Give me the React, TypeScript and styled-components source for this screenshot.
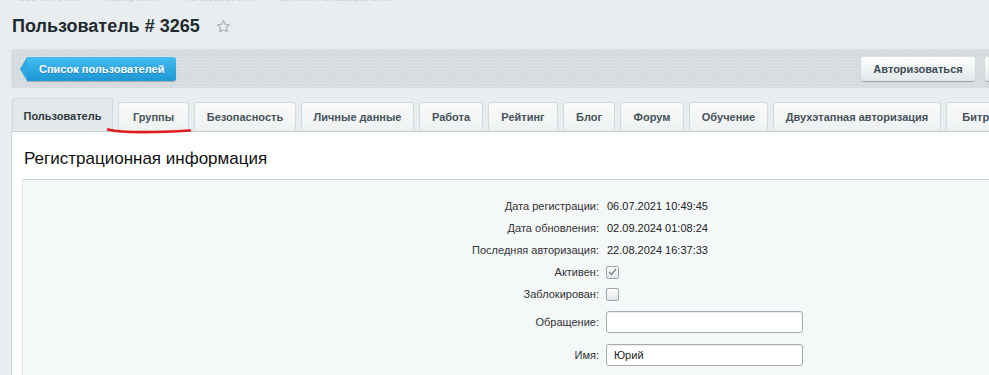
import React from 'react';
import styled, { createGlobalStyle } from 'styled-components';

const GlobalStyle = createGlobalStyle`
	body {
		margin: 0;
		background: #e8edef;
		font-family: Arial, "Liberation Sans", sans-serif;
		overflow: hidden;
	}
`;

const Page = styled.div`
	box-sizing: border-box;
	width: 1094px;
	padding-left: 11px;
	position: relative;
`;

const Crumbs = styled.div`
	display: flex;
	gap: 24px;
	height: 14px;
	margin-top: -10px;
	font-size: 11px;
	line-height: 14px;
	color: #c8d0d4;
`;

const TitleRow = styled.div`
	display: flex;
	align-items: center;
	gap: 16px;
	margin-top: 11px;
	padding-left: 1px;
`;

const Title = styled.h1`
	margin: 0;
	font-size: 18px;
	line-height: 22px;
	font-weight: bold;
	color: #1f2a30;
`;

const Toolbar = styled.div`
	display: flex;
	align-items: center;
	justify-content: space-between;
	height: 39px;
	margin-top: 12px;
	padding: 0 9px;
	border-radius: 3px 0 0 3px;
	background-color: #d5dbde;
	background-image: radial-gradient(rgba(255, 255, 255, 0.35) 0.6px, transparent 0.9px);
	background-size: 3px 3px;
`;

const BackButton = styled.button`
	position: relative;
	height: 24px;
	margin-left: 7px;
	padding: 0 12px;
	border: none;
	border-radius: 0 3px 3px 0;
	background: linear-gradient(#45bdf0, #1d96d4);
	color: #fff;
	font-family: inherit;
	font-size: 11px;
	font-weight: bold;
	text-shadow: 0 1px 0 rgba(0, 60, 100, 0.35);
	box-shadow: 0 1px 1px rgba(0, 0, 0, 0.2);

	&::before {
		content: '';
		position: absolute;
		left: -7px;
		top: 0;
		border-style: solid;
		border-width: 12px 7px 12px 0;
		border-color: transparent #2ea8e2 transparent transparent;
	}
`;

const RightGroup = styled.div`
	display: flex;
	gap: 10px;
`;

const GreyButton = styled.button<{ $w: number }>`
	width: ${(p) => p.$w}px;
	height: 24px;
	border: none;
	border-radius: 3px;
	background: linear-gradient(#fdfefe, #e3e8ea);
	box-shadow: 0 1px 1px rgba(0, 0, 0, 0.28), inset 0 1px 0 #fff;
	color: #3f4b54;
	font-family: inherit;
	font-size: 11px;
	font-weight: bold;
`;

const Tabs = styled.div`
	display: flex;
	align-items: flex-end;
	gap: 5px;
	height: 32px;
	margin-top: 10px;
	padding-left: 1px;
`;

const Tab = styled.div<{ $w: number; $active?: boolean }>`
	box-sizing: border-box;
	flex-shrink: 0;
	width: ${(p) => p.$w}px;
	height: ${(p) => (p.$active ? 32 : 28)}px;
	display: flex;
	align-items: center;
	justify-content: center;
	padding-top: ${(p) => (p.$active ? 2 : 0)}px;
	border: 1px solid #d3d9dc;
	border-bottom: none;
	border-radius: 3px 3px 0 0;
	background: ${(p) => (p.$active ? '#e3e8ea' : 'linear-gradient(#fafbfb, #eef1f2)')};
	color: ${(p) => (p.$active ? '#2f3a40' : '#46525a')};
	font-size: 11px;
	font-weight: bold;
	white-space: nowrap;
	overflow: hidden;
`;

const Panel = styled.div`
	margin-top: 1px;
	background: #fff;
	border-top: 1px solid #c6ced2;
	border-left: 1px solid #cbd2d6;
	height: 260px;
`;

const SectionTitle = styled.h2`
	margin: 0;
	padding: 16px 0 0 12px;
	font-size: 17px;
	line-height: 22px;
	font-weight: normal;
	color: #111;
`;

const Section = styled.div`
	margin: 9px 0 0 10px;
	padding-top: 15px;
	border-top: 1px solid #cdd4d7;
	border-left: 1px solid #e3e8ea;
	background: #f5f8f9;
	height: 200px;
	display: grid;
	grid-template-columns: 576px 1fr;
	column-gap: 8px;
	align-content: start;
`;

const Label = styled.div<{ $tall?: boolean }>`
	height: ${(p) => (p.$tall ? 33 : 22)}px;
	display: flex;
	align-items: center;
	justify-content: flex-end;
	font-size: 11px;
	color: #333;
`;

const Value = styled.div<{ $tall?: boolean }>`
	height: ${(p) => (p.$tall ? 33 : 22)}px;
	display: flex;
	align-items: center;
	font-size: 11px;
	color: #222;
`;

const Check = styled.span`
	box-sizing: border-box;
	width: 13px;
	height: 13px;
	margin-left: -1px;
	display: inline-flex;
	align-items: center;
	justify-content: center;
	border: 1px solid #9ea6ab;
	border-radius: 2px;
	background: linear-gradient(#fbfbfb, #e3e6e8);
`;

const Input = styled.div`
	box-sizing: border-box;
	width: 197px;
	height: 22px;
	margin-left: -1px;
	padding: 0 7px;
	display: flex;
	align-items: center;
	border: 1px solid #a3acb1;
	border-radius: 3px;
	background: #fff;
	box-shadow: inset 0 1px 1px rgba(0, 0, 0, 0.08);
	font-size: 11px;
	color: #222;
`;

const Scribble = styled.svg`
	position: absolute;
	left: 104px;
	top: 136px;
`;

const tabs = [
	{ label: 'Пользователь', w: 101, active: true },
	{ label: 'Группы', w: 71 },
	{ label: 'Безопасность', w: 102 },
	{ label: 'Личные данные', w: 113 },
	{ label: 'Работа', w: 64 },
	{ label: 'Рейтинг', w: 70 },
	{ label: 'Блог', w: 52 },
	{ label: 'Форум', w: 64 },
	{ label: 'Обучение', w: 79 },
	{ label: 'Двухэтапная авторизация', w: 168 },
	{ label: 'Битрикс24', w: 90 },
];

const info = [
	['Дата регистрации:', '06.07.2021 10:49:45'],
	['Дата обновления:', '02.09.2024 01:08:24'],
	['Последняя авторизация:', '22.08.2024 16:37:33'],
];

function Star() {
	return (
		<svg width="15" height="15" viewBox="0 0 24 24">
			<path
				d="M12 2.5l2.9 6.2 6.7.7-5 4.6 1.4 6.6L12 17.3l-6 3.3 1.4-6.6-5-4.6 6.7-.7z"
				fill="none"
				stroke="#aeb6bb"
				strokeWidth="2"
				strokeLinejoin="round"
			/>
		</svg>
	);
}

export default function App() {
	return (
		<Page>
			<GlobalStyle />
			<Crumbs>
				<span>Рабочий стол</span>
				<span>Настройки</span>
				<span>Пользователи</span>
				<span>Список пользователей</span>
			</Crumbs>
			<TitleRow>
				<Title>Пользователь # 3265</Title>
				<Star />
			</TitleRow>
			<Toolbar>
				<BackButton>Список пользователей</BackButton>
				<RightGroup>
					<GreyButton $w={114}>Авторизоваться</GreyButton>
					<GreyButton $w={100}>Копировать</GreyButton>
				</RightGroup>
			</Toolbar>
			<Tabs>
				{tabs.map((t) => (
					<Tab key={t.label} $w={t.w} $active={t.active}>
						{t.label}
					</Tab>
				))}
			</Tabs>
			<Panel>
				<SectionTitle>Регистрационная информация</SectionTitle>
				<Section>
					{info.map(([k, v]) => (
						<React.Fragment key={k}>
							<Label>{k}</Label>
							<Value>{v}</Value>
						</React.Fragment>
					))}
					<Label>Активен:</Label>
					<Value>
						<Check>
							<svg width="9" height="8" viewBox="0 0 9 8">
								<path d="M1 4l2.5 2.5L8 1" fill="none" stroke="#7d868b" strokeWidth="1.4" />
							</svg>
						</Check>
					</Value>
					<Label>Заблокирован:</Label>
					<Value>
						<Check />
					</Value>
					<Label $tall>Обращение:</Label>
					<Value $tall>
						<Input />
					</Value>
					<Label $tall>Имя:</Label>
					<Value $tall>
						<Input>Юрий</Input>
					</Value>
				</Section>
			</Panel>
			<Scribble width="90" height="10" viewBox="0 0 90 10">
				<path
					d="M4 3.5 C 14 6, 30 6.5, 50 6 S 78 5, 86 4.5"
					fill="none"
					stroke="#e01b1f"
					strokeWidth="2.6"
					strokeLinecap="round"
				/>
			</Scribble>
		</Page>
	);
}
